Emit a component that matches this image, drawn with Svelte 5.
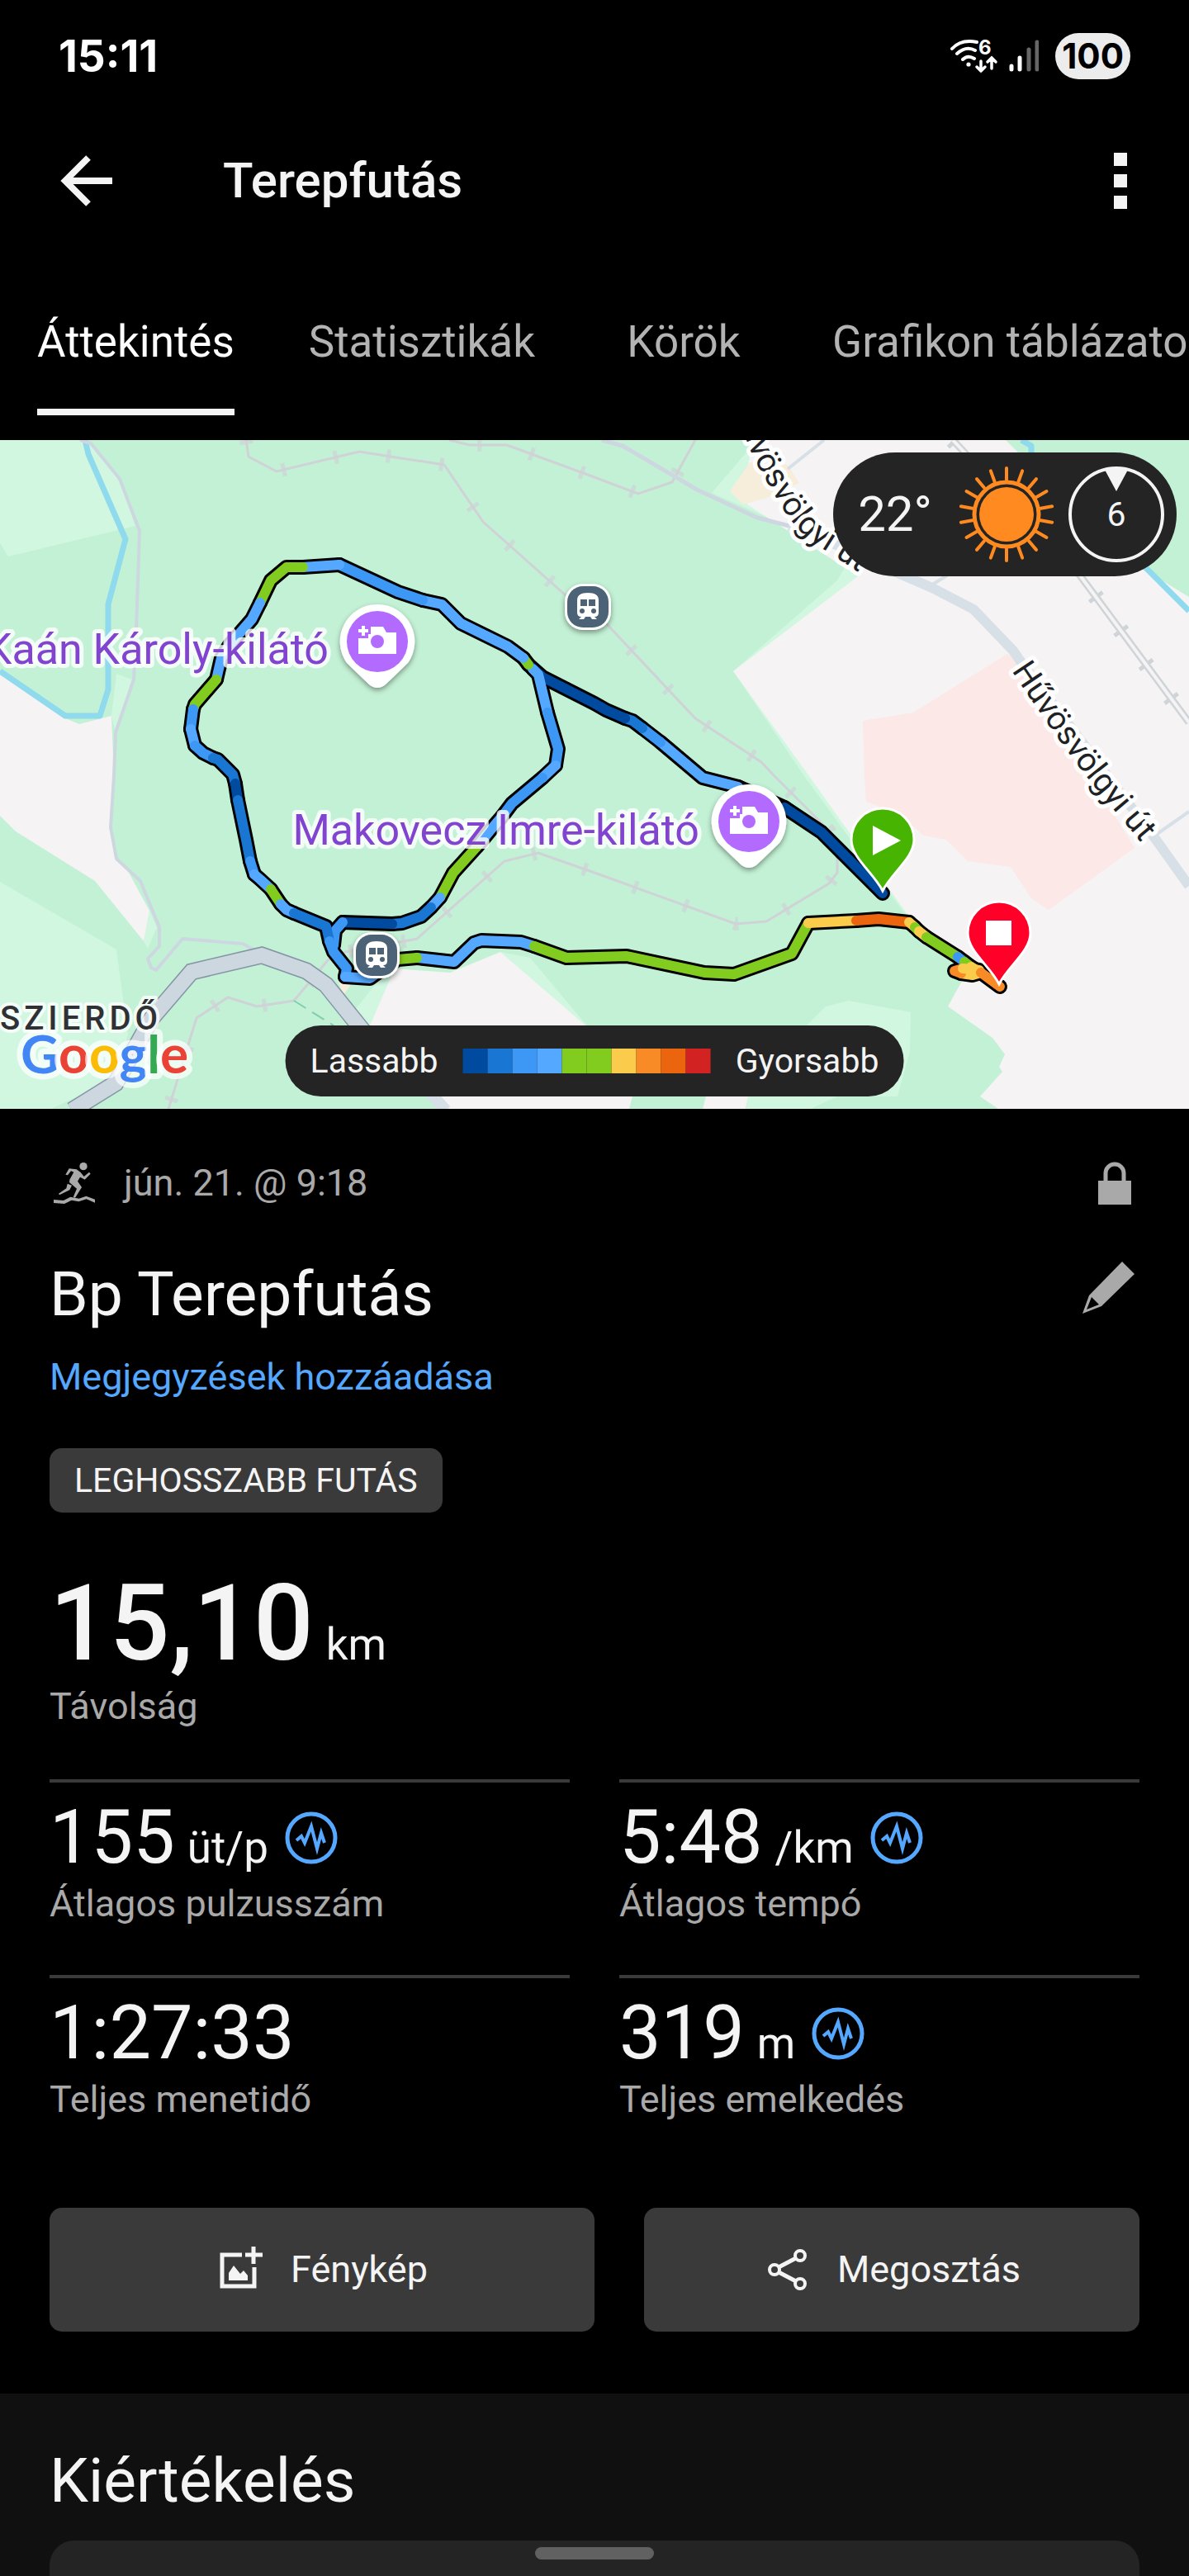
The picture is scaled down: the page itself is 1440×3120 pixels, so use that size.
<script>
	let activeTab = 'Áttekintés';

	const tabs = ['Áttekintés', 'Statisztikák', 'Körök', 'Grafikon táblázatok'];

	const stats = [
		{ value: '155', unit: 'üt/p', label: 'Átlagos pulzusszám', zones: true },
		{ value: '5:48', unit: '/km', label: 'Átlagos tempó', zones: true },
		{ value: '1:27:33', unit: '', label: 'Teljes menetidő', zones: false },
		{ value: '319', unit: 'm', label: 'Teljes emelkedés', zones: true }
	];

	// pace colours, slow to fast
	const pace = {
		b1: '#004a9f',
		b2: '#1976d2',
		b3: '#3d98f5',
		b4: '#55a8ff',
		g: '#82cb1f',
		y: '#fbcc4c',
		o1: '#f98b27',
		o2: '#eb650f',
		r: '#d22222'
	};
	const legend = ['b1', 'b2', 'b3', 'b4', 'g', 'g', 'y', 'o1', 'o2', 'r'];

	const track = [
		// descent from the start
		['b1', '1069,549 995,475 950,445'],
		['b4', '894,420 851,409 800,366'],
		['b3', '800,366 778,349'],
		['b2', '778,349 766,340 757,337'],
		['b1', '757,337 734,327 720,319 657,287 640,272'],
		// finish
		['b4', '505,627 550,632 574,609 583,606 631,608 647,613'],
		['g', '647,613 686,627 759,625 853,645 889,647 959,622 979,585'],
		['y', '979,585 1037,582'],
		['o2', '1037,582 1064,580 1101,584'],
		['y', '1101,584 1108,590'],
		['g', '1108,590 1113,595'],
		['y', '1113,595 1122,602'],
		['g', '1122,602 1160,626'],
		['b3', '1160,626 1168,632'],
		['g', '1168,632 1176,638'],
		['y', '1176,638 1188,645 1178,648 1164,646'],
		['o1', '1164,646 1156,643 1166,640'],
		['y', '1166,640 1186,642'],
		['o1', '1188,645 1211,662'],
		// right side of the loop
		['b4', '645,277 652,284 663,330'],
		['b3', '663,330 676,374 673,394'],
		['b4', '673,394 657,409'],
		['b3', '657,409 620,440 608,456'],
		['b4', '608,456 601,464 578,492'],
		['g', '578,492 549,524 533,554'],
		['b4', '533,554 522,566'],
		['b2', '522,566 510,577 487,585 475,586'],
		['b1', '475,586 415,584'],
		['b3', '415,584 406,594 404,612'],
		// left side of the loop
		['g', '640,272 634,264'],
		['b4', '634,264 615,250 558,222 535,199 512,194'],
		['b3', '512,194 482,184 411,151'],
		['b4', '411,151 367,154'],
		['g', '367,154 347,154 328,170 315,197'],
		['b4', '315,197 305,217 278,248 268,264 262,290'],
		['g', '262,290 236,320 234,326'],
		['b3', '234,326 231,350'],
		['b4', '231,350 236,370'],
		['b3', '236,370 246,379 258,385'],
		['b2', '258,385 264,387 282,405 285,416'],
		['b1', '285,416 288,436'],
		['b2', '288,436 298,484 303,510'],
		['b3', '303,510 308,526'],
		['b4', '308,526 315,532 328,544'],
		['g', '328,544 340,562'],
		['b4', '340,562 347,569 356,573'],
		['b2', '356,573 395,589 399,607'],
		['b3', '399,607 404,620 420,640 418,650'],
		['b4', '418,650 448,652 470,636'],
		['g', '470,636 482,629 505,627']
	];

	const viewpoints = [
		{ x: 457, y: 244 },
		{ x: 907, y: 462 }
	];
	const stations = [
		{ x: 712, y: 202 },
		{ x: 456, y: 624 }
	];
	const rays = Array.from({ length: 18 }, (_, i) => i * 20);
	const mapTrail =
		'298,0 301,20 335,38 435,14 538,30 585,99 684,187 711,205 736,224 842,337 922,390 938,407 1005,474 1014,507 1014,524 1004,537 928,583 891,586 720,524 652,500 611,510 505,604 418,620 397,630 356,679 311,686 276,675 238,700 204,810';
	const mapTrailNorth = '544,0 569,6 614,6 720,45 773,65 814,51 842,0';
	const mainRoad = '87,812 140,779 184,700 232,644 317,624 371,643 395,660 440,716';
</script>

<div class="screen">
	<div class="status-bar">
		<span class="clock">15:11</span>
		<div class="status-icons">
			<svg class="wifi" viewBox="0 0 60 46" aria-hidden="true">
				<g fill="none" stroke="#fff" stroke-width="4" stroke-linecap="round">
					<path d="M3 14Q14 2 33 6M9 20Q20 10 31 16M16 27Q22 21 30 26" />
					<path d="M38 29v12M33 36l5 5l5-5M51 38v-12M46 30l5-5l5 5" stroke-width="3.5" />
				</g>
				<circle cx="23" cy="33" r="2.6" fill="#fff" />
				<text x="35" y="21" class="wifi-gen">6</text>
			</svg>
			<svg class="signal" viewBox="0 0 36 40" aria-hidden="true">
				<g fill="none" stroke-width="5" stroke-linecap="round">
					<path d="M3 32v4M13 22v14" stroke="#fff" />
					<path d="M24 12v24M34 3v33" stroke="#666" />
				</g>
			</svg>
			<span class="battery">100</span>
		</div>
	</div>

	<header class="app-bar">
		<button class="icon-btn" aria-label="Vissza">
			<svg viewBox="0 0 90 90" aria-hidden="true">
				<path d="M47 17L19 45L47 73M20 45H76" fill="none" stroke="#f4f4f4" stroke-width="8" />
			</svg>
		</button>
		<h1>Terepfutás</h1>
		<button class="icon-btn" aria-label="További lehetőségek">
			<svg viewBox="0 0 90 90" aria-hidden="true">
				<path d="M37 11h16v16H37zM37 37h16v16H37zM37 63h16v16H37z" fill="#f4f4f4" />
			</svg>
		</button>
	</header>

	<div class="tabs" role="tablist">
		{#each tabs as tab}
			<button
				class="tab"
				class:active={tab === activeTab}
				role="tab"
				aria-selected={tab === activeTab}
				on:click={() => (activeTab = tab)}
			>
				<span>{tab}</span>
			</button>
		{/each}
	</div>

	<section class="map" aria-label="Útvonal térkép">
		<svg class="map-canvas" viewBox="0 0 1440 810" preserveAspectRatio="xMidYMid slice">
			<defs>
				<filter id="pin-shadow" x="-30%" y="-30%" width="160%" height="160%">
					<feDropShadow dx="0" dy="3" stdDeviation="3" flood-opacity="0.4" />
				</filter>
				<path id="road-north" d="M887 -42C892 -28 897 -16 903 -2C912 22 920 36 931 54C940 70 948 84 961 101C974 116 984 124 1000 134L1080 186" />
				<path id="road-south" d="M1225 279Q1290 377 1330 425T1400 509" />
			</defs>

			<!-- land -->
			<rect width="1440" height="810" fill="#c3f1d5" />
			<g fill="#d1f7e1">
				<polygon points="0,0 105,0 125,20 146,53 164,104 10,141 0,125" />
				<polygon points="135,334 141,283 160,290 140,354" />
				<polygon points="181,570 174,607 179,616 190,590" />
				<polygon points="0,535 141,617 155,720 138,774 62,810 0,810" />
				<polygon points="908,10 862,64 957,106 1023,154 1014,170 888,280 974,407 1096,574 1110,574 1060,165" />
				<polygon points="470,640 484,636 448,709 430,690" />
				<polygon points="606,620 642,627 720,720 700,720" />
				<polygon points="1028,679 1103,693 1102,740 1087,795 1014,795 982,810 904,810 906,795 977,709 1000,686" />
			</g>
			<g fill="#f5f3f4">
				<polygon points="0,282 79,337 96,344 135,334 138,407 134,469 141,507 156,524 181,570 174,607 115,534 19,474 0,455" />
				<polygon points="912,0 906,30 905,78 1039,165 888,280 980,407 1100,576 1165,640 1165,655 1148,686 1202,724 1217,744 1210,759 1214,765 1187,795 1209,810 1440,810 1440,190 1386,157 1232,14 1218,0" />
				<polygon points="478,640 545,645 606,620 709,709 770,780 762,810 540,810 448,709" />
				<polygon points="855,795 906,795 903,810 851,810" />
			</g>
			<polygon points="908,27 884,62 900,78 929,70 968,52 954,30" fill="#f7eddb" />
			<polygon points="410,657 428,655 416,672" fill="#f7eddb" />
			<polygon points="1220,259 1106,330 1045,340 1047,407 1049,438 1087,452 1119,479 1146,484 1172,510 1224,517 1249,555 1270,569 1374,494 1237,269" fill="#fce8e6" />

			<!-- water -->
			<g fill="none" stroke="#8fdaec" stroke-width="7" stroke-linejoin="round">
				<polyline points="103,0 107,17 152,120 131,199 131,302 121,334 79,334 0,280" />
				<polyline points="1237,0 1249,7 1249,20 1388,155 1440,207" />
			</g>

			<!-- trails -->
			<g fill="none" stroke="#cfd2d6">
				<polyline points={mapTrail} stroke-width="3" />
				<polyline points={mapTrail} stroke-width="16" stroke-dasharray="5 60" stroke-opacity="0.7" />
				<polyline points={mapTrailNorth} stroke-width="3" />
				<polyline points={mapTrailNorth} stroke-width="16" stroke-dasharray="5 60" stroke-dashoffset="30" stroke-opacity="0.7" />
			</g>
			<path d="M356 679L404 709" stroke="#82cdb0" stroke-width="2" stroke-dasharray="17 9" />

			<!-- railway -->
			<g fill="none">
				<path d="M1154 0L1308 164L1440 342" stroke="#cfd4d8" stroke-width="20" stroke-dasharray="5 46" />
				<path d="M1154 0L1308 164L1440 342" stroke="#cfd4d8" stroke-width="9" />
				<path d="M1154 0L1308 164L1440 342" stroke="#f5f3f4" stroke-width="4" />
			</g>

			<!-- roads -->
			<g fill="none" stroke="#cdd7e0" stroke-linejoin="round">
				<polyline points="97,0 110,4 145,47 169,110 165,230 162,290 140,354 138,407 134,469 141,507 170,534 193,590 193,613 179,628 183,639 189,642 221,604 294,610 312,620" stroke-width="4" />
				<polyline points="729,0 754,7 844,60 917,94 956,104" stroke-width="5" />
				<polyline points="434,709 525,795 540,812" stroke="#d8e0e7" stroke-width="14" />
				<polyline points="956,104 1020,130 1085,160 1129,179 1179,205 1227,255 1236,268 1400,484 1440,540" stroke="#d8e0e7" stroke-width="12" />
				<path d="M998 0L954 35M1129 175L1147 164M1440 450L1400 478" stroke="#d8e0e7" stroke-width="4" />
				<polyline points={mainRoad} stroke="#8595a6" stroke-width="21" stroke-linejoin="miter" />
				<polyline points={mainRoad} stroke-width="18" stroke-linejoin="miter" />
			</g>

			<!-- road names -->
			<g class="road-name">
				<text><textPath href="#road-north">Hűvösvölgyi út</textPath></text>
				<text><textPath href="#road-south">Hűvösvölgyi út</textPath></text>
			</g>
			<text class="district" x="0" y="714">SZIERDŐ</text>

			<!-- track -->
			<g fill="none" stroke-linejoin="round" stroke-linecap="round">
				<path d="M950 445L894 420" stroke="#000" stroke-width="18" />
				{#each track as [, points]}
					<polyline {points} stroke="#000" stroke-width="18" />
				{/each}
			</g>
			<g fill="none" stroke-linejoin="round" stroke-linecap="round">
				{#each track as [color, points]}
					<polyline {points} stroke={pace[color]} stroke-width="12" />
				{/each}
			</g>

			<!-- places -->
			{#each stations as s}
				<g transform="translate({s.x} {s.y})">
					<rect x="-28" y="-28" width="56" height="56" rx="22" fill="#fff" filter="url(#pin-shadow)" />
					<rect x="-25" y="-25" width="50" height="50" rx="19" fill="#4b6277" />
					<path d="M-13 -8Q-13 -17 0 -17Q13 -17 13 -8V7Q13 12 8 12L11 15H5L3 12H-3L-5 15H-11L-8 12Q-13 12 -13 7z" fill="#fff" />
					<path d="M-9 -9h8v8h-8zM1 -9h8v8h-8z" fill="#4b6277" />
					<circle cx="-7" cy="5" r="3" fill="#4b6277" />
					<circle cx="7" cy="5" r="3" fill="#4b6277" />
				</g>
			{/each}
			{#each viewpoints as v}
				<g transform="translate({v.x} {v.y})">
					<path d="M0 -45A45 45 0 0 1 37 26L10 52Q0 60 -10 52L-37 26A45 45 0 0 1 0 -45z" fill="#fff" filter="url(#pin-shadow)" />
					<circle r="37" fill="#b36bff" />
					<path d="M-23 15V-4H-11V-9H-8V-18H7L11 -11H23V15z" fill="#fff" />
					<path d="M-17 -19v12M-23 -13h12" stroke="#fff" stroke-width="4" />
					<circle r="8" fill="#b36bff" />
				</g>
			{/each}
			<g class="place-name">
				<text x="398" y="271" text-anchor="end">Kaán Károly-kilátó</text>
				<text x="847" y="490" text-anchor="end">Makovecz Imre-kilátó</text>
			</g>

			<!-- start and finish -->
			<g stroke="#fff" stroke-width="3">
				<path d="M1069 546C1058 524 1031 506 1031 484A38 38 0 0 1 1107 484C1107 506 1080 524 1069 546z" fill="#46b400" />
				<path d="M1210 659C1199 637 1172 619 1172 597A38 38 0 0 1 1248 597C1248 619 1221 637 1210 659z" fill="#ff0029" />
			</g>
			<path d="M1057 467L1091 485L1057 503z" fill="#fff" />
			<rect x="1194" y="582" width="31" height="30" fill="#fff" />

			<text class="google" x="25" y="767">
				<tspan fill="#4285f4">G</tspan><tspan fill="#ea4335">o</tspan><tspan fill="#fbbc05">o</tspan><tspan fill="#4285f4">g</tspan><tspan fill="#34a853">l</tspan><tspan fill="#ea4335">e</tspan>
			</text>
		</svg>

		<div class="weather">
			<span class="temperature">22°</span>
			<svg class="sun" viewBox="-60 -60 120 120" aria-hidden="true">
				<circle r="33" fill="#ff8a1f" />
				<circle r="39" fill="none" stroke="#ff8a1f" stroke-width="5" />
				{#each rays as angle}
					<path d="M0 -42V-56" transform="rotate({angle})" stroke="#ff8a1f" stroke-width="4" stroke-linecap="round" />
				{/each}
			</svg>
			<div class="wind">
				<svg viewBox="-60 -60 120 120" aria-hidden="true">
					<circle r="56" fill="none" stroke="#f4f4f4" stroke-width="4" />
					<path d="M-14 -54Q0 -58 14 -54L0 -28z" fill="#f4f4f4" />
				</svg>
				<span>6</span>
			</div>
		</div>

		<div class="legend">
			<span>Lassabb</span>
			<div class="swatches">
				{#each legend as key}
					<i style="background: {pace[key]}"></i>
				{/each}
			</div>
			<span>Gyorsabb</span>
		</div>
	</section>

	<main class="summary">
		<div class="meta">
			<svg class="small-icon" viewBox="30 21 180 180" aria-hidden="true">
				<g fill="#a9a9a9">
					<circle cx="153" cy="50" r="14" />
					<path d="M88 80L101 58L128 61L143 72L155 87L174 71L179 77L158 98L141 89L132 104L147 126L123 164L116 162L129 131L102 108L103 98L118 71L108 67L96 82z" />
					<path d="M95 113L111 119L103 136L66 154L63 149L91 130z" />
					<path d="M45 171L81 174L106 161L137 167L163 158L195 170V182L164 169L136 178L110 173L84 186L45 183z" />
				</g>
			</svg>
			<time datetime="06-21T09:18">jún. 21. @ 9:18</time>
			<svg class="small-icon" viewBox="0 0 60 60" role="img" aria-label="Privát">
				<path d="M10 27h40v29H10z" fill="#a9a9a9" />
				<path d="M19 28V18a11 11 0 0 1 22 0v10" fill="none" stroke="#a9a9a9" stroke-width="5" />
			</svg>
		</div>

		<div class="title-row">
			<h2>Bp Terepfutás</h2>
			<button class="edit" aria-label="Szerkesztés">
				<svg viewBox="0 0 75 75" aria-hidden="true">
					<path d="M54 6L69 21L29 60L6 69L14 47zM17 49L11 64L26 58z" fill="#a9a9a9" fill-rule="evenodd" />
				</svg>
			</button>
		</div>
		<a class="notes" href="#megjegyzesek">Megjegyzések hozzáadása</a>
		<span class="badge">LEGHOSSZABB FUTÁS</span>

		<div class="distance">
			<p class="figure"><strong>15,10</strong><span class="unit">km</span></p>
			<p class="label">Távolság</p>
		</div>

		<div class="stats">
			{#each stats as stat}
				<div class="stat">
					<p class="figure">
						{stat.value}{#if stat.unit}<span class="unit">{stat.unit}</span>{/if}
						{#if stat.zones}
							<svg class="pulse" viewBox="0 0 64 64" aria-hidden="true">
								<g fill="none" stroke="#55a8ff">
									<circle cx="32" cy="32" r="29" stroke-width="5" />
									<path d="M14 35L20 30L24 38L32 18L39 45L44 26L48 38" stroke-width="4" />
								</g>
							</svg>
						{/if}
					</p>
					<p class="label">{stat.label}</p>
				</div>
			{/each}
		</div>

		<div class="actions">
			<button class="action photo">
				<svg viewBox="0 0 60 60" aria-hidden="true">
					<path d="M31 12H7V50H46V27M45 2v21M35 12h21" fill="none" stroke="#f4f4f4" stroke-width="5" />
					<path d="M15 43V34L21 25L29 35L33 31L38 37V43z" fill="#f4f4f4" />
				</svg>
				Fénykép
			</button>
			<button class="action share">
				<svg viewBox="0 0 60 60" aria-hidden="true">
					<g fill="none" stroke="#f4f4f4" stroke-width="4">
						<circle cx="14" cy="30" r="6" />
						<circle cx="45" cy="13" r="6" />
						<circle cx="45" cy="47" r="6" />
						<path d="M19 27L40 16M19 33L40 44" stroke-width="5" />
					</g>
				</svg>
				Megosztás
			</button>
		</div>
	</main>

	<section class="evaluation">
		<h2>Kiértékelés</h2>
		<div class="card"></div>
	</section>

	<div class="nav-handle" aria-hidden="true"></div>
</div>

<style>
	:global(body) {
		background: #000;
	}

	.screen {
		display: flex;
		flex-direction: column;
		min-height: 100vh;
		overflow: hidden;
		background: #000;
		color: #f4f4f4;
		font-family: Roboto, "Noto Sans", sans-serif;
		font-size: 45px;
		line-height: 60px;
	}

	h1, h2, p {
		margin: 0;
		font-weight: 400;
	}

	button {
		padding: 0;
		border: 0;
		background: none;
		color: inherit;
		font: inherit;
		cursor: pointer;
	}

	svg {
		display: block;
		flex-shrink: 0;
	}

	.status-bar {
		display: flex;
		align-items: center;
		justify-content: space-between;
		height: 136px;
		padding: 0 71px;
		font-family: Inter, Roboto, sans-serif;
	}

	.clock {
		color: #fff;
		font-size: 53px;
		font-weight: 700;
	}

	.status-icons {
		display: flex;
		align-items: center;
		gap: 12px;
	}

	.wifi {
		width: 60px;
		height: 46px;
	}

	.wifi-gen {
		fill: #fff;
		font-size: 24px;
		font-weight: 700;
	}

	.signal {
		width: 36px;
		height: 40px;
	}

	.battery {
		margin-left: 8px;
		padding: 0 8px;
		border-radius: 28px;
		background: #ececec;
		color: #000;
		font-size: 42px;
		font-weight: 700;
		line-height: 56px;
	}

	.app-bar {
		display: flex;
		align-items: center;
		height: 165px;
		padding: 0 38px 0 60px;
	}

	.icon-btn svg {
		width: 90px;
		height: 90px;
	}

	h1 {
		flex: 1;
		margin-left: 120px;
		font-size: 60px;
		font-weight: 500;
	}

	.tabs {
		display: flex;
		margin: 32px 0 30px;
		overflow: hidden;
	}

	.tab {
		flex-shrink: 0;
		min-width: 270px;
		padding: 0 45px;
		color: #b3b3b3;
		font-size: 53px;
		white-space: nowrap;
	}

	.tab span {
		display: block;
		border-bottom: 8px solid transparent;
		line-height: 162px;
	}

	.tab.active {
		color: #fff;
	}

	.tab.active span {
		border-color: #f4f4f4;
	}

	.map {
		position: relative;
	}

	.map-canvas {
		width: 100%;
		height: auto;
	}

	.map-canvas text {
		paint-order: stroke;
		stroke-linejoin: round;
	}

	.road-name text {
		fill: #202124;
		stroke: #fff;
		stroke-width: 10px;
		font-size: 40px;
	}

	.place-name text {
		fill: #8244d0;
		stroke: rgba(255, 255, 255, 0.8);
		stroke-width: 10px;
		font-size: 52px;
	}

	.district {
		fill: #303134;
		stroke: rgba(255, 255, 255, 0.8);
		stroke-width: 8px;
		font-size: 40px;
		font-weight: 500;
		letter-spacing: 5px;
	}

	.google {
		stroke: rgba(255, 255, 255, 0.7);
		stroke-width: 14px;
		font-family: Lato, Roboto, sans-serif;
		font-size: 64px;
		font-weight: 700;
	}

	.weather {
		position: absolute;
		top: 15px;
		right: 15px;
		display: flex;
		align-items: center;
		height: 150px;
		padding: 0 13px 0 30px;
		border-radius: 75px;
		background: #242424;
	}

	.temperature {
		font-size: 60px;
	}

	.sun {
		width: 120px;
		height: 120px;
		margin: 0 13px 0 30px;
	}

	.wind {
		display: grid;
		place-items: center;
		font-size: 41px;
	}

	.wind svg, .wind span {
		grid-area: 1 / 1;
	}

	.wind svg {
		width: 120px;
		height: 120px;
	}

	.legend {
		position: absolute;
		bottom: 15px;
		left: 50%;
		display: flex;
		align-items: center;
		gap: 30px;
		height: 86px;
		padding: 0 30px;
		border-radius: 43px;
		background: #242424;
		font-size: 41px;
		transform: translateX(-50%);
	}

	.swatches {
		display: flex;
	}

	.swatches i {
		width: 30px;
		height: 30px;
	}

	.summary {
		display: flex;
		flex-direction: column;
		align-items: stretch;
		padding: 60px 60px 75px;
	}

	.meta {
		display: flex;
		align-items: center;
		gap: 30px;
		color: #a9a9a9;
	}

	.meta time {
		flex: 1;
	}

	.small-icon {
		width: 60px;
		height: 60px;
	}

	.title-row {
		display: flex;
		align-items: flex-start;
		justify-content: space-between;
		margin-top: 59px;
	}

	h2 {
		font-size: 75px;
		line-height: 90px;
	}

	.edit svg {
		width: 75px;
		height: 75px;
	}

	.notes {
		align-self: flex-start;
		margin-top: 26px;
		color: #55a8ff;
		text-decoration: none;
	}

	.badge {
		align-self: flex-start;
		margin-top: 56px;
		padding: 0 30px;
		border-radius: 15px;
		background: #3a3a3a;
		font-size: 41px;
		line-height: 78px;
	}

	.distance {
		margin-top: 68px;
	}

	.figure {
		display: flex;
		align-items: baseline;
		height: 90px;
		font-size: 90px;
		line-height: 90px;
	}

	.distance .figure {
		height: 132px;
		font-size: 128px;
		line-height: 132px;
	}

	.distance strong {
		font-weight: 500;
	}

	.figure .unit {
		margin-left: 15px;
		font-size: 53px;
		line-height: 60px;
	}

	.label {
		margin-top: 5px;
		color: #a9a9a9;
	}

	.stats {
		display: grid;
		grid-template-columns: 1fr 1fr;
		gap: 56px 60px;
		margin-top: 58px;
	}

	.stat {
		padding-top: 22px;
		border-top: 4px solid #3a3a3a;
	}

	.pulse {
		align-self: center;
		width: 64px;
		height: 64px;
		margin-left: 20px;
	}

	.actions {
		display: flex;
		gap: 60px;
		margin-top: 101px;
	}

	.action {
		display: flex;
		align-items: center;
		justify-content: center;
		gap: 30px;
		height: 150px;
		border-radius: 15px;
		background: #3a3a3a;
	}

	.action svg {
		width: 60px;
		height: 60px;
	}

	.photo {
		flex: 11;
	}

	.share {
		flex: 10;
	}

	.evaluation {
		display: flex;
		flex: 1;
		flex-direction: column;
		padding: 60px 60px 0;
		background: #101010;
	}

	.card {
		flex: 1;
		min-height: 43px;
		margin-top: 28px;
		border-radius: 30px 30px 0 0;
		background: #242424;
	}

	.nav-handle {
		position: fixed;
		bottom: 20px;
		left: 50%;
		width: 144px;
		height: 15px;
		border-radius: 8px;
		background: #616161;
		transform: translateX(-50%);
	}
</style>
